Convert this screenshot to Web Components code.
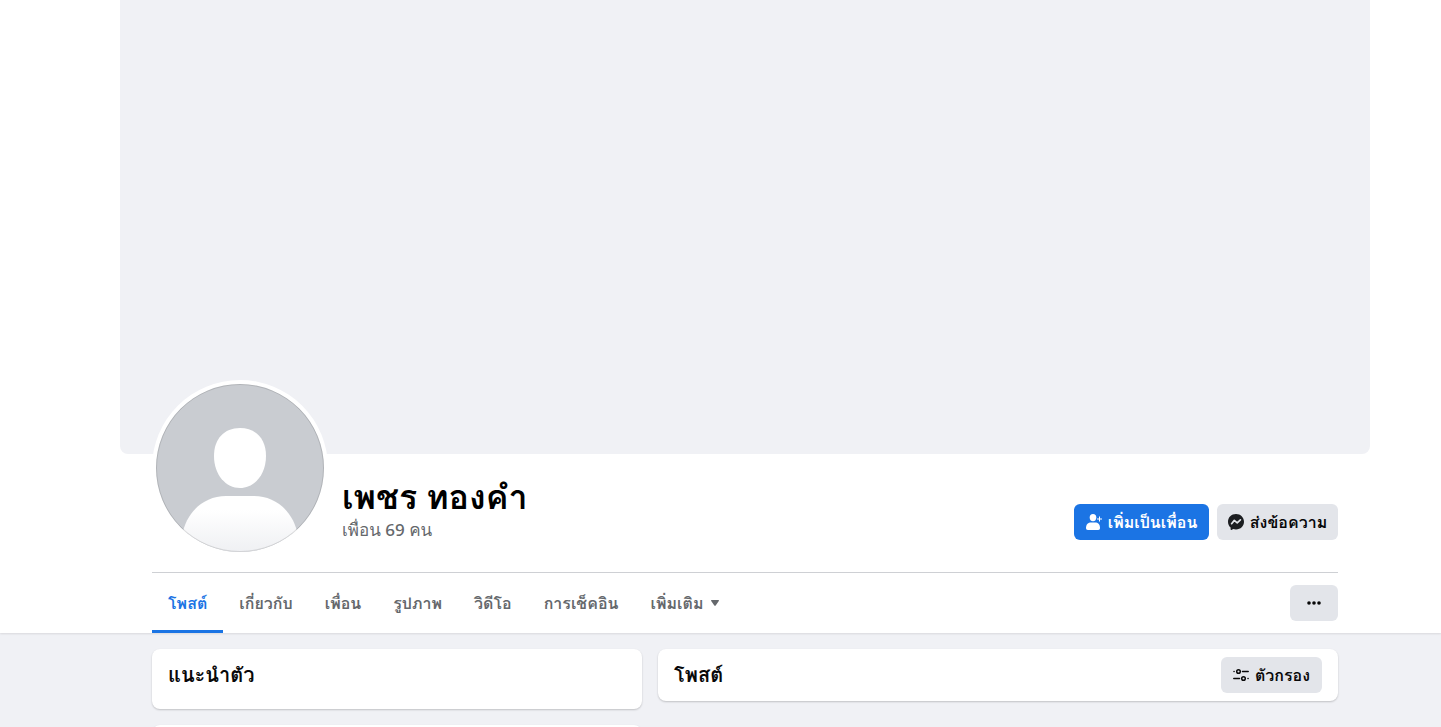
<!DOCTYPE html>
<html lang="th">
<head>
<meta charset="utf-8">
<meta name="viewport" content="width=device-width, initial-scale=1">
<title>เพชร ทองคำ</title>
<style>
  html, body { margin: 0; }
  body { font-family: "Noto Sans", "Loma", "Noto Sans Thai Looped", sans-serif; background: #f0f1f5; color: #080809; height: 100vh; overflow: hidden; }
</style>
</head>
<body>
<profile-page></profile-page>
<script>
const define = (name, html) => {
  const template = document.createElement('template');
  template.innerHTML = html;
  customElements.define(name, class extends HTMLElement {
    constructor() {
      super();
      this.attachShadow({ mode: 'open' }).append(template.content.cloneNode(true));
    }
  });
};

define('profile-avatar', `
  <style>
    :host { display: block; width: 168px; height: 168px; padding: 4px; border-radius: 50%; background: #fff; flex: none; }
    svg { display: block; }
  </style>
  <svg width="168" height="168" viewBox="0 0 168 168" role="img" aria-label="รูปโปรไฟล์">
    <defs>
      <linearGradient id="body" x1="0" y1="0" x2="0" y2="1"><stop offset="0.25" stop-color="#fff"/><stop offset="1" stop-color="#eff0f3"/></linearGradient>
      <clipPath id="round"><circle cx="84" cy="84" r="84"/></clipPath>
    </defs>
    <g clip-path="url(#round)">
      <rect width="168" height="168" fill="#c9ccd1"/>
      <path d="M84 44c16 0 26 11 26 28 0 19-12 32-26 32S58 91 58 72c0-17 10-28 26-28z" fill="#fff"/>
      <path d="M26 152c4-24 22-40 44-40h28c22 0 40 16 44 40v16H26z" fill="url(#body)"/>
    </g>
    <circle cx="84" cy="84" r="83.5" fill="none" stroke="#000" stroke-opacity=".12"/>
  </svg>`);

define('action-button', `
  <style>
    :host { display: block; flex: none; }
    button { display: flex; align-items: center; justify-content: center; gap: 6px; box-sizing: border-box; width: 100%; height: 36px; margin: 0; padding: 0; border: 0; border-radius: 6px; background: var(--button-bg, #e3e5ea); color: var(--button-fg, #080809); font-family: inherit; font-size: 16px; line-height: 20px; font-weight: 600; white-space: nowrap; cursor: pointer; }
    ::slotted(svg) { display: block; flex: none; }
  </style>
  <button type="button"><slot name="icon"></slot><slot></slot></button>`);

define('profile-header', `
  <style>
    :host { display: flex; align-items: flex-start; }
    profile-avatar { margin-top: -74px; position: relative; }
    .name { flex: 1; margin: 20px 0 0 14px; }
    h1 { margin: 0; font-size: 34px; line-height: 44px; font-weight: 700; color: #000; }
    p { margin: 0; line-height: 24px; }
    a { color: #65686c; font-size: 17px; font-weight: 500; text-decoration: none; }
    .actions { display: flex; gap: 8px; margin-top: 50px; }
    .add { width: 135px; --button-bg: #1b74e4; --button-fg: #fff; }
    .message { width: 121px; }
  </style>
  <profile-avatar></profile-avatar>
  <div class="name"><h1>เพชร ทองคำ</h1><p><a href="#friends">เพื่อน 69 คน</a></p></div>
  <div class="actions">
    <action-button class="add"><svg slot="icon" width="16" height="16" viewBox="0 0 16 16" aria-hidden="true" fill="#fff"><ellipse cx="7" cy="3.600" rx="3.300" ry="3.600"/><path d="M0 14c0-3.600 2.400-5.400 5-5.400h4.200c2.600 0 4.800 1.800 4.800 5.400 0 1.200-.6 2-1.800 2H1.800C.6 16 0 15.200 0 14z"/><path d="M13 2.500h1v2h2v1h-2v2h-1v-2h-2v-1h2z"/></svg>เพิ่มเป็นเพื่อน</action-button>
    <action-button class="message"><svg slot="icon" width="16" height="16" viewBox="0 0 16 16" aria-hidden="true"><path fill="#1c1e21" d="M8 0C3.400 0 0 3.300 0 7.800c0 2.400 1 4.400 2.600 5.800v1.700c0 .5.500.8.900.6l1.700-.8c.9.300 1.800.4 2.800.4 4.600 0 8-3.300 8-7.700S12.600 0 8 0z"/><path d="M3.600 9.700 6.300 6.400 9.200 8.800 12.400 5.900" fill="none" stroke="#e3e5ea" stroke-width="1.700" stroke-linecap="round" stroke-linejoin="round"/></svg>ส่งข้อความ</action-button>
  </div>`);

define('profile-tabs', `
  <style>
    :host { display: flex; align-items: center; height: 60px; border-top: 1px solid #ced0d4; }
    nav { display: flex; flex: 1; height: 60px; }
    a { display: flex; align-items: center; box-sizing: border-box; height: 60px; padding: 0 16px; gap: 8px; border-bottom: 3px solid transparent; border-top: 3px solid transparent; color: #65686c; font-size: 16px; line-height: 20px; font-weight: 600; text-decoration: none; white-space: nowrap; }
    a[aria-current] { color: #1b74e4; border-bottom-color: #1b74e4; }
    action-button { width: 48px; }
  </style>
  <nav>
    <a href="#posts" aria-current="page">โพสต์</a><a href="#about">เกี่ยวกับ</a><a href="#friends">เพื่อน</a><a href="#photos">รูปภาพ</a><a href="#videos">วิดีโอ</a><a href="#checkins">การเช็คอิน</a><a href="#more">เพิ่มเติม<svg width="8" height="6" viewBox="0 0 8 6" aria-hidden="true"><path d="M.5 0h7c.5 0 .6.500.3.900L4.700 5.400c-.4.500-1 .5-1.400 0L.2.900C-.1.500 0 0 .5 0z" fill="#65686c"/></svg></a>
  </nav>
  <action-button aria-label="ตัวเลือกเพิ่มเติม"><svg slot="icon" width="14" height="4" viewBox="0 0 14 4" aria-hidden="true" fill="#080809"><circle cx="2" cy="2" r="1.800"/><circle cx="7" cy="2" r="1.800"/><circle cx="12" cy="2" r="1.800"/></svg></action-button>`);

define('content-card', `
  <style>
    :host { display: flex; align-items: center; justify-content: space-between; box-sizing: border-box; padding: 8px 16px; border-radius: 8px; background: #fff; box-shadow: 0 1px 2px rgba(0,0,0,.2); }
    ::slotted(h2) { margin: 0; font-size: 20px; line-height: 36px; font-weight: 600; }
  </style>
  <slot></slot>`);

define('profile-page', `
  <style>
    :host { display: block; --side: 32px; }
    header { background: #fff; padding-left: 49px; box-shadow: 0 1px 2px rgba(0,0,0,.1); }
    .wrap { max-width: 1250px; margin: 0 auto; box-sizing: border-box; }
    .cover { height: 454px; border-radius: 0 0 8px 8px; background: #f0f1f5; }
    .inner { padding: 0 var(--side); }
    profile-header { min-height: 118px; }
    main { padding: 16px 0 0 49px; }
    .columns { display: grid; grid-template-columns: 490fr 680fr; gap: 16px; align-items: start; padding: 0 var(--side); }
    .left { display: grid; gap: 16px; }
    .intro { min-height: 60px; align-items: flex-start; }
    .filter { width: 101px; }
  </style>
  <header>
    <div class="wrap">
      <div class="cover"></div>
      <div class="inner"><profile-header></profile-header><profile-tabs></profile-tabs></div>
    </div>
  </header>
  <main>
    <div class="wrap columns">
      <div class="left">
        <content-card class="intro"><h2>แนะนำตัว</h2></content-card>
        <content-card class="intro"></content-card>
      </div>
      <content-card><h2>โพสต์</h2>
        <action-button class="filter"><svg slot="icon" width="16" height="14" viewBox="0 0 16 14" aria-hidden="true" fill="none" stroke="#080809" stroke-width="1.500" stroke-linecap="round"><circle cx="5.500" cy="3.500" r="1.800"/><path d="M1 3.500h.1M9.500 3.500h5.700M.8 10.500h5.700M15 10.500h.1"/><circle cx="10.500" cy="10.500" r="1.800"/></svg>ตัวกรอง</action-button>
      </content-card>
    </div>
  </main>`);
</script>
</body>
</html>
